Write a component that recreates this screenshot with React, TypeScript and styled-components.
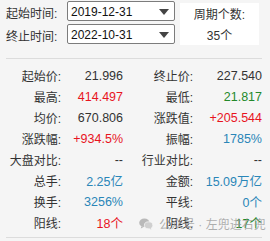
import styled, { createGlobalStyle } from 'styled-components';

type Tone = 'plain' | 'up' | 'down' | 'info';

interface Stat {
  label: string;
  value: string;
  tone: Tone;
}

const rows: [Stat, Stat][] = [
  [
    { label: '起始价:', value: '21.996', tone: 'plain' },
    { label: '终止价:', value: '227.540', tone: 'plain' },
  ],
  [
    { label: '最高:', value: '414.497', tone: 'up' },
    { label: '最低:', value: '21.817', tone: 'down' },
  ],
  [
    { label: '均价:', value: '670.806', tone: 'plain' },
    { label: '涨跌值:', value: '+205.544', tone: 'up' },
  ],
  [
    { label: '涨跌幅:', value: '+934.5%', tone: 'up' },
    { label: '振幅:', value: '1785%', tone: 'info' },
  ],
  [
    { label: '大盘对比:', value: '--', tone: 'plain' },
    { label: '行业对比:', value: '--', tone: 'plain' },
  ],
  [
    { label: '总手:', value: '2.25亿', tone: 'info' },
    { label: '金额:', value: '15.09万亿', tone: 'info' },
  ],
  [
    { label: '换手:', value: '3256%', tone: 'info' },
    { label: '平线:', value: '0个', tone: 'info' },
  ],
  [
    { label: '阳线:', value: '18个', tone: 'up' },
    { label: '阴线:', value: '17个', tone: 'down' },
  ],
];

const toneColor: Record<Tone, string> = {
  plain: '#333333',
  up: '#e8141e',
  down: '#23892a',
  info: '#2a86b8',
};

const App = () => {
  return (
    <>
      <GlobalStyle />
      <Panel>
        <RangeBar>
          <FieldLabel>起始时间:</FieldLabel>
          <DateSelect>
            <span>2019-12-31</span>
            <Caret />
          </DateSelect>
          <PeriodBox>
            <span>周期个数:</span>
            <span>35个</span>
          </PeriodBox>
          <FieldLabel>终止时间:</FieldLabel>
          <DateSelect>
            <span>2022-10-31</span>
            <Caret />
          </DateSelect>
        </RangeBar>
        <Divider />
        <StatGrid>
          {rows.map((pair) =>
            pair.map((stat) => [
              <StatLabel key={stat.label}>{stat.label}</StatLabel>,
              <StatValue key={stat.label + 'v'} $tone={stat.tone}>
                {stat.value}
              </StatValue>,
            ])
          )}
        </StatGrid>
        <Divider />
        <Watermark>
          <svg width="14" height="12" viewBox="0 0 14 12">
            <ellipse cx="5.4" cy="4.8" rx="5.2" ry="4.3" fill="#b9b9b9" />
            <path d="M2.4 8.2 L1.8 10.4 L4.6 9" fill="#b9b9b9" />
            <ellipse cx="9.6" cy="7.3" rx="4.2" ry="3.5" fill="#cfcfcf" stroke="#f5f5f5" strokeWidth="0.8" />
            <path d="M11.6 10 L12.4 11.8 L10.2 10.6" fill="#cfcfcf" />
          </svg>
          <span>公众号 · 左兜进右兜</span>
        </Watermark>
      </Panel>
    </>
  );
};

const GlobalStyle = createGlobalStyle`
  body {
    margin: 0;
    background-color: #f5f5f5;
    font-family: "Liberation Sans", "Noto Sans CJK SC", sans-serif;
    color: #333333;
  }
`;

const Panel = styled.div`
  position: relative;
  width: 270px;
  height: 241px;
  padding-top: 1px;
  box-sizing: border-box;
`;

const RangeBar = styled.div`
  display: grid;
  grid-template-columns: 56px 108px 79px;
  grid-template-rows: 20px 20px;
  column-gap: 5px;
  row-gap: 3px;
  padding-left: 6px;
`;

const FieldLabel = styled.span`
  display: flex;
  align-items: center;
  font-size: 12px;
  color: #333333;
  white-space: nowrap;
  padding-top: 2px;
`;

const DateSelect = styled.div`
  display: flex;
  align-items: center;
  justify-content: space-between;
  box-sizing: border-box;
  height: 20px;
  padding: 1px 5px 0 3px;
  border: 1px solid #7c7c7c;
  border-radius: 2px;
  background-color: #ffffff;
  font-size: 12px;
  color: #111111;
`;

const Caret = styled.i`
  width: 0;
  height: 0;
  border-left: 5px solid transparent;
  border-right: 5px solid transparent;
  border-top: 6px solid #444444;
`;

const PeriodBox = styled.div`
  grid-column: 3;
  grid-row: 1 / span 2;
  display: flex;
  flex-direction: column;
  align-items: center;
  justify-content: center;
  gap: 4px;
  margin: 2px 0 -1px;
  background-color: #ffffff;
  font-size: 12px;
  color: #333333;
`;

const Divider = styled.hr`
  margin: 14px 8px 0 6px;
  border: none;
  border-top: 1px solid #dcdcdc;
  & + div {
    margin-top: 0;
  }
`;

const StatGrid = styled.div`
  display: grid;
  grid-template-columns: 55px 62px 70px 69px;
  grid-auto-rows: 21px;
  padding: 6px 0 0 6px;
  margin-bottom: -10px;
`;

const StatLabel = styled.span`
  display: flex;
  align-items: center;
  justify-content: flex-end;
  font-size: 12px;
  color: #333333;
  white-space: nowrap;
`;

const StatValue = styled.span<{ $tone: Tone }>`
  display: flex;
  align-items: center;
  justify-content: flex-end;
  font-size: 12.5px;
  color: ${(p) => toneColor[p.$tone]};
  white-space: nowrap;
`;

const Watermark = styled.div`
  position: absolute;
  left: 139px;
  top: 215px;
  display: flex;
  align-items: center;
  gap: 6px;
  font-size: 12px;
  color: rgba(150, 150, 150, 0.75);
  pointer-events: none;
`;

export default App;
